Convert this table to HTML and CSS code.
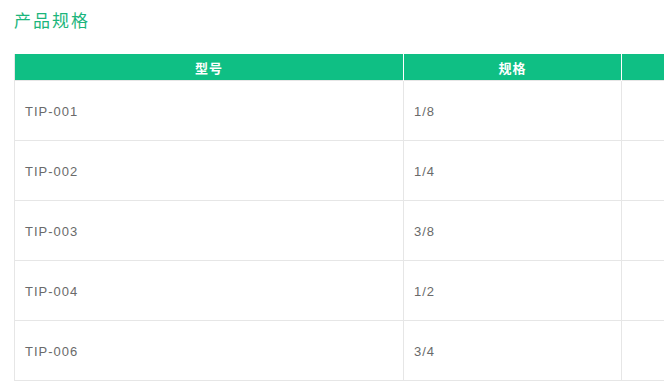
FILE: index.html
```html
<!DOCTYPE html>
<html lang="zh">
<head>
<meta charset="utf-8">
<link rel="stylesheet" href="styles.css">
</head>
<body>
<div class="page">
  <h2 class="title">产品规格</h2>
  <table class="spec">
    <thead>
      <tr><th class="c1">型号</th><th class="c2">规格</th><th class="c3"></th></tr>
    </thead>
    <tbody>
      <tr><td>TIP-001</td><td>1/8</td><td></td></tr>
      <tr><td>TIP-002</td><td>1/4</td><td></td></tr>
      <tr><td>TIP-003</td><td>3/8</td><td></td></tr>
      <tr><td>TIP-004</td><td>1/2</td><td></td></tr>
      <tr><td>TIP-006</td><td>3/4</td><td></td></tr>
    </tbody>
  </table>
</div>
</body>
</html>
```
FILE: styles.css
```css
html, body {
  margin: 0;
  padding: 0;
  background: #fff;
  overflow: hidden;
}
.page {
  width: 664px;
  height: 392px;
  overflow: hidden;
  padding: 0 0 0 14px;
  box-sizing: border-box;
  font-family: "Liberation Sans", Arial, "Noto Sans CJK SC", sans-serif;
}
.title {
  margin: 0;
  padding-top: 9px;
  height: 54px;
  box-sizing: border-box;
  font-size: 17px;
  line-height: 22px;
  font-weight: normal;
  letter-spacing: 2px;
  color: #1bb57c;
  font-family: "Noto Sans CJK SC", sans-serif;
}
.spec {
  border-collapse: collapse;
  table-layout: fixed;
  width: 850px;
}
.spec th {
  background: #0fbf84;
  color: #fff;
  font-size: 13px;
  font-weight: bold;
  height: 26px;
  padding: 0;
  text-align: center;
  border-left: 1px solid #fff;
  border-right: 1px solid #fff;
  font-family: "Noto Sans CJK SC", sans-serif;
  letter-spacing: 1px;
}
.spec th.c1 { width: 388px; border-left: 1px solid #e6e6e6; }
.spec th.c2 { width: 217px; }
.spec td {
  height: 58px;
  padding: 1px 0 0 10px;
  border: 1px solid #e6e6e6;
  color: #6a6a6a;
  font-size: 13px;
  letter-spacing: 1px;
  vertical-align: middle;
}
```
